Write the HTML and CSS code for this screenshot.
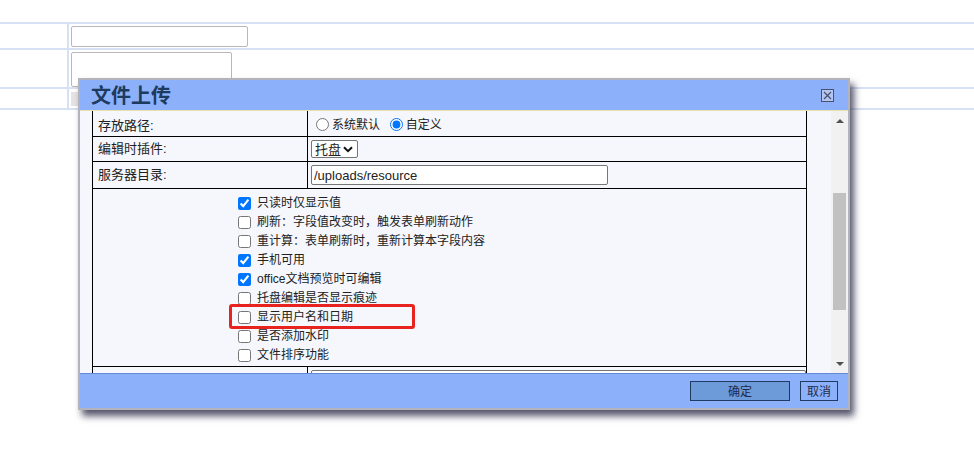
FILE: index.html
```html
<!DOCTYPE html>
<html lang="zh-CN">
<head>
<meta charset="utf-8">
<title>文件上传</title>
<link rel="stylesheet" href="styles.css">
</head>
<body>
<div class="page">
  <div class="bgrow r1"><div class="lc"></div><div class="rc"><input class="bg-input" type="text"></div></div>
  <div class="bgrow r2"><div class="lc"></div><div class="rc"><textarea class="bg-ta"></textarea></div></div>
  <div class="bgrow r3"><div class="lc"></div><div class="rc"><span class="bg-btn"></span></div></div>
</div>

<div class="dialog">
  <div class="dlg-head">
    <span class="dlg-title">文件上传</span>
    <svg class="dlg-close" width="13" height="13" viewBox="0 0 13 13">
      <rect x="0.5" y="0.5" width="12" height="12" fill="#b3c6f2" stroke="#4d4f6e"/>
      <path d="M3 3 L10 10 M10 3 L3 10" stroke="#4d4f6e" stroke-width="1.3"/>
    </svg>
  </div>
  <div class="dlg-body">
    <div class="dlg-scroll">
      <table class="form">
        <tr class="row-a">
          <td class="lbl">存放路径:</td>
          <td class="val radios">
            <label class="opt"><input type="radio" name="p">系统默认</label>
            <label class="opt"><input type="radio" name="p" checked>自定义</label>
          </td>
        </tr>
        <tr class="row-b">
          <td class="lbl">编辑时插件:</td>
          <td class="val">
            <span class="sel-wrap">
              <select class="sel"><option>托盘</option></select>
              <svg class="sel-arrow" width="10" height="7" viewBox="0 0 10 7"><path d="M1 1.2 L5 5.2 L9 1.2" fill="none" stroke="#111" stroke-width="2"/></svg>
            </span>
          </td>
        </tr>
        <tr class="row-c">
          <td class="lbl">服务器目录:</td>
          <td class="val"><input class="txt" type="text" value="/uploads/resource"></td>
        </tr>
        <tr class="row-d">
          <td class="checks" colspan="2">
            <label class="chk"><input type="checkbox" checked>只读时仅显示值</label>
            <label class="chk"><input type="checkbox">刷新：字段值改变时，触发表单刷新动作</label>
            <label class="chk"><input type="checkbox">重计算：表单刷新时，重新计算本字段内容</label>
            <label class="chk"><input type="checkbox" checked>手机可用</label>
            <label class="chk"><input type="checkbox" checked>office文档预览时可编辑</label>
            <label class="chk"><input type="checkbox">托盘编辑是否显示痕迹</label>
            <label class="chk"><input type="checkbox">显示用户名和日期</label>
            <label class="chk"><input type="checkbox">是否添加水印</label>
            <label class="chk"><input type="checkbox">文件排序功能</label>
          </td>
        </tr>
        <tr class="row-e">
          <td class="lbl"></td>
          <td class="val val-e"><input class="txt txt-e" type="text"></td>
        </tr>
      </table>
    </div>
    <div class="vscroll">
      <span class="arrow up"></span>
      <span class="thumb"></span>
      <span class="arrow down"></span>
    </div>
  </div>
  <div class="dlg-foot">
    <button class="btn ok">确定</button>
    <button class="btn cancel">取消</button>
  </div>
</div>

<div class="mark"></div>
</body>
</html>
```
FILE: styles.css
```css
html, body {
  margin: 0;
  padding: 0;
  background: #ffffff;
  font-family: "Liberation Sans", "Noto Sans CJK SC", sans-serif;
  color: #222;
}

.page {
  padding-top: 22px;
}

.bgrow {
  display: flex;
  border-top: 2px solid #d6e1f4;
}
.bgrow.r1 { height: 24px; }
.bgrow.r2 { height: 37px; }
.bgrow.r3 { height: 19px; border-bottom: 2px solid #d6e1f4; }

.lc {
  width: 67px;
  border-right: 2px solid #d6e1f4;
}
.rc {
  padding-left: 2px;
  flex: 1;
}

.bg-input {
  box-sizing: border-box;
  display: block;
  margin: 2px 0 0 0;
  width: 177px;
  height: 21px;
  border: 1px solid #b8b8b8;
  border-radius: 2px;
  padding: 0;
}
.bg-ta {
  box-sizing: border-box;
  display: block;
  margin: 2px 0 0 0;
  width: 161px;
  height: 35px;
  border: 1px solid #b8b8b8;
  border-radius: 2px;
  padding: 0;
  resize: both;
}
.bg-btn {
  display: block;
  margin-top: 3px;
  width: 10px;
  height: 14px;
  background: #e4e4e4;
}

/* dialog */
.dialog {
  position: absolute;
  left: 78px;
  top: 78px;
  width: 768px;
  border: 2px solid #b3b3bb;
  background: #f5f7fc;
  box-shadow: 4px 6px 7px rgba(30, 30, 60, 0.75);
}

.dlg-head {
  height: 30px;
  background: #8cb1fa;
  border-bottom: 1px solid #e6e2ae;
  display: flex;
  align-items: center;
  justify-content: space-between;
  padding: 0 14px 0 11px;
}
.dlg-title {
  font-family: "Noto Sans CJK SC", sans-serif;
  font-size: 20px;
  font-weight: bold;
  color: #1d3a5f;
  line-height: 30px;
}
.dlg-close {
  display: block;
}

.dlg-body {
  height: 262px;
  display: flex;
  background: #f5f7fc;
}
.dlg-scroll {
  flex: 1;
  overflow: hidden;
  padding-left: 12px;
}

.form {
  width: 715px;
  border-collapse: collapse;
  margin-top: -1px;
  font-size: 13px;
}
.form td {
  border: 1px solid #000;
  padding: 0;
  vertical-align: middle;
}
.form .lbl {
  width: 209px;
  padding-left: 5px;
  line-height: 16px;
  color: #222;
}
.form .val {
  padding-left: 3px;
}
.row-a td { height: 21px; padding-top: 4px; }
.row-b td { height: 24px; }
.row-c td { height: 26px; }
.row-d td { height: 171px; }
.row-e td { height: 30px; vertical-align: top; }

.opt {
  display: inline-flex;
  align-items: center;
  font-size: 12px;
  line-height: 16px;
  margin-right: 6px;
}
.opt:first-child { margin-left: 5px; }
.opt input {
  margin: 0 3px 0 0;
  width: 13px;
  height: 13px;
}

.sel-wrap {
  position: relative;
  display: block;
  width: 47px;
  height: 18px;
}
.sel {
  -webkit-appearance: none;
  appearance: none;
  display: block;
  box-sizing: border-box;
  height: 18px;
  width: 47px;
  font-family: "Noto Sans CJK SC", sans-serif;
  font-size: 13px;
  line-height: 16px;
  padding: 0 0 0 3px;
  border: 1px solid #767676;
  border-radius: 2px;
  background: #fff;
  color: #222;
}
.sel-arrow {
  position: absolute;
  right: 5px;
  top: 6px;
  pointer-events: none;
}

.txt {
  display: block;
  box-sizing: border-box;
  width: 297px;
  height: 20px;
  border: 1px solid #767676;
  border-radius: 2px;
  padding: 0 2px;
  font-family: "Liberation Sans", sans-serif;
  font-size: 13px;
  color: #222;
  background: #fff;
}
.val-e { padding-top: 3px !important; }
.txt-e { width: 495px; }

.form .checks {
  padding: 5px 0 1px 145px;
}
.chk {
  display: flex;
  align-items: center;
  height: 19px;
  font-size: 12px;
  line-height: 19px;
  color: #222;
}
.chk input {
  margin: 0 6px 0 0;
  width: 13px;
  height: 13px;
}

/* fake scrollbar */
.vscroll {
  width: 17px;
  background: #f1f1f1;
  display: flex;
  flex-direction: column;
  align-items: center;
}
.arrow {
  width: 0;
  height: 0;
  border-left: 4px solid transparent;
  border-right: 4px solid transparent;
}
.arrow.up {
  margin-top: 8px;
  border-bottom: 4px solid #505050;
}
.arrow.down {
  margin-top: auto;
  margin-bottom: 7px;
  border-top: 4px solid #505050;
}
.thumb {
  margin-top: 70px;
  width: 13px;
  height: 117px;
  background: #c1c1c1;
}

.dlg-foot {
  height: 34px;
  background: #8cb1fa;
  border-top: 1px solid #6489d6;
  display: flex;
  justify-content: flex-end;
  align-items: flex-start;
  gap: 10px;
  padding-right: 10px;
}
.btn {
  margin-top: 7px;
  height: 20px;
  box-sizing: border-box;
  border: 1px solid #1f3b63;
  font-family: "Noto Sans CJK SC", sans-serif;
  font-size: 12px;
  line-height: 18px;
  color: #1d2b48;
  padding: 0;
  border-radius: 0;
}
.btn.ok {
  width: 100px;
  background: #6d9ad9;
}
.btn.cancel {
  width: 38px;
  background: #8cb1fa;
}

/* annotation */
.mark {
  position: absolute;
  left: 229px;
  top: 304px;
  width: 186px;
  height: 25px;
  box-sizing: border-box;
  border: 3px solid #e8221e;
  border-radius: 3px;
}
```
